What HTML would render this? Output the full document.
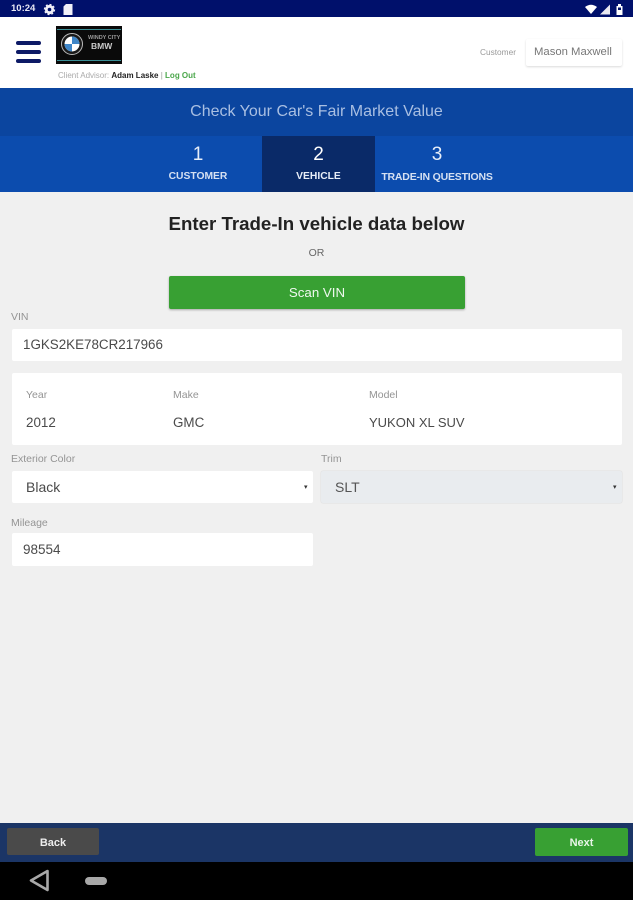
<!DOCTYPE html>
<html><head><meta charset="utf-8">
<style>
*{box-sizing:border-box}
html,body{margin:0;padding:0}
body{width:633px;height:900px;position:relative;overflow:hidden;background:#f0f0f0;font-family:"Liberation Sans",sans-serif;color:#444}
#w{position:absolute;left:0;top:0;width:633px;height:900px;filter:blur(.35px)}
.a{position:absolute}
.t{position:absolute;white-space:nowrap;line-height:1}
.box{position:absolute;background:#fff;border-radius:2px}
.lab{position:absolute;white-space:nowrap;line-height:1;font-size:10.500px;color:#949494}
.val{position:absolute;white-space:nowrap;line-height:1;font-size:13.400px;color:#4a4a4a}
</style></head><body><div id="w">
<div class="a" style="left:0;top:0;width:633px;height:17px;background:#00106b"></div>
<div class="t" style="left:11px;top:4px;font-size:9.500px;font-weight:bold;color:#e8e8f4">10:24</div>
<svg class="a" style="left:0;top:0" width="633" height="17">
<circle cx="49.500" cy="9.500" r="3.200" fill="none" stroke="#f0f0f8" stroke-width="2.800"/>
<circle cx="49.500" cy="9.500" r="5" fill="none" stroke="#f0f0f8" stroke-width="1.300" stroke-dasharray="2 1.900"/>
<path d="M63.500 6.500L66 4h6.500v11h-9z" fill="#f0f0f8"/>
<path d="M585 7q6-4.500 12 0l-6 7z" fill="#fff"/>
<path d="M600 14.500l10-10v10z" fill="#e8e8f0"/>
<path d="M616.500 6h1.500v-2h3v2h1.500v9h-6z" fill="#fff"/>
<rect x="618" y="7.500" width="3" height="2.500" fill="#00106b"/>
</svg>
<div class="a" style="left:0;top:17px;width:633px;height:71px;background:#fff"></div>
<div class="a" style="left:16px;top:41px;width:25px;height:3.500px;background:#0d1a66;border-radius:2px"></div>
<div class="a" style="left:16px;top:50px;width:25px;height:3.500px;background:#0d1a66;border-radius:2px"></div>
<div class="a" style="left:16px;top:59px;width:25px;height:3.500px;background:#0d1a66;border-radius:2px"></div>
<div class="a" style="left:56px;top:26px;width:66px;height:38px;background:#0a0a0a"></div>
<div class="a" style="left:57px;top:29px;width:64px;height:1px;background:#3b8f96"></div>
<div class="a" style="left:57px;top:60px;width:64px;height:1px;background:#3b8f96"></div>
<svg class="a" style="left:61px;top:33px" width="22" height="22">
<circle cx="11" cy="11" r="10.500" fill="#1a1a1a" stroke="#bbb" stroke-width="1"/>
<circle cx="11" cy="11" r="7.500" fill="#fff"/>
<path d="M11 11V3.500a7.500 7.500 0 0 1 7.500 7.500zM11 11v7.500a7.500 7.500 0 0 1-7.500-7.500z" fill="#3f86c8"/>
</svg>
<div class="t" style="left:88px;top:35.500px;font-size:5.500px;font-weight:bold;color:#999">WINDY CITY</div>
<div class="t" style="left:91px;top:42px;font-size:8.500px;font-weight:bold;color:#ccc">BMW</div>
<div class="t" style="left:58px;top:72px;font-size:8px;color:#aaa">Client Advisor: <span style="color:#222;font-weight:bold">Adam Laske</span> <span style="color:#999">|</span> <span style="color:#4aa64a;font-weight:bold">Log Out</span></div>
<div class="t" style="left:480px;top:48px;font-size:8.300px;color:#999">Customer</div>
<div class="a" style="left:526px;top:39px;width:96px;height:27px;background:#fff;border-radius:2px;box-shadow:0 1px 2px rgba(0,0,0,.15)"></div>
<div class="t" style="left:534px;top:46.500px;font-size:11.300px;color:#777">Mason Maxwell</div>
<div class="a" style="left:0;top:88px;width:633px;height:48px;background:#0b459f"></div>
<div class="t" style="left:0;width:633px;text-align:center;top:104px;font-size:16px;color:#a9bfe2">Check Your Car's Fair Market Value</div>
<div class="a" style="left:0;top:136px;width:633px;height:56px;background:#0c4cae"></div>
<div class="a" style="left:262px;top:136px;width:113px;height:56px;background:#0a2a68"></div>
<div class="t" style="left:141px;width:114px;text-align:center;top:145px;font-size:19px;color:#e8eef8">1</div>
<div class="t" style="left:262px;width:113px;text-align:center;top:145px;font-size:19px;color:#fff">2</div>
<div class="t" style="left:380px;width:114px;text-align:center;top:145px;font-size:19px;color:#e8eef8">3</div>
<div class="t" style="left:141px;width:114px;text-align:center;top:171.500px;font-size:10.300px;font-weight:bold;color:#d5e0f2">CUSTOMER</div>
<div class="t" style="left:262px;width:113px;text-align:center;top:171.500px;font-size:10.300px;font-weight:bold;color:#e8eef8">VEHICLE</div>
<div class="t" style="left:380px;width:114px;text-align:center;top:171.500px;font-size:10.500px;font-weight:bold;letter-spacing:-.2px;color:#d5e0f2">TRADE-IN QUESTIONS</div>
<div class="t" style="left:0;width:633px;text-align:center;top:215px;font-size:18.700px;font-weight:bold;color:#222">Enter Trade-In vehicle data below</div>
<div class="t" style="left:0;width:633px;text-align:center;top:248px;font-size:10.500px;color:#666">OR</div>
<div class="a" style="left:169px;top:276px;width:296px;height:33px;background:#38a033;border-radius:2px;box-shadow:0 1px 2px rgba(0,0,0,.3)"></div>
<div class="t" style="left:169px;width:296px;text-align:center;top:285.500px;font-size:13.300px;color:#eef8ee">Scan VIN</div>
<div class="lab" style="left:11px;top:312px">VIN</div>
<div class="box" style="left:12px;top:329px;width:610px;height:32px"></div>
<div class="val" style="left:23px;top:338px">1GKS2KE78CR217966</div>
<div class="box" style="left:12px;top:373px;width:610px;height:72px"></div>
<div class="lab" style="left:26px;top:390px">Year</div>
<div class="lab" style="left:173px;top:390px">Make</div>
<div class="lab" style="left:369px;top:390px">Model</div>
<div class="val" style="left:26px;top:416px">2012</div>
<div class="val" style="left:173px;top:416px">GMC</div>
<div class="val" style="left:369px;top:416px;font-size:13px">YUKON XL SUV</div>
<div class="lab" style="left:11px;top:454px">Exterior Color</div>
<div class="lab" style="left:321px;top:454px">Trim</div>
<div class="box" style="left:12px;top:471px;width:301px;height:32px"></div>
<div class="val" style="left:26px;top:480px;font-size:14px">Black</div>
<div class="t" style="left:304px;top:484px;font-size:7px;color:#333">▾</div>
<div class="box" style="left:321px;top:471px;width:301px;height:32px;background:#e9ecef;box-shadow:0 0 1px rgba(0,0,0,.2)"></div>
<div class="val" style="left:335px;top:480px;color:#555;font-size:14px">SLT</div>
<div class="t" style="left:613px;top:484px;font-size:7px;color:#333">▾</div>
<div class="lab" style="left:11px;top:518px">Mileage</div>
<div class="box" style="left:12px;top:533px;width:301px;height:33px"></div>
<div class="val" style="left:23px;top:543px;font-size:13.500px">98554</div>
<div class="a" style="left:0;top:823px;width:633px;height:39px;background:#1b3566"></div>
<div class="a" style="left:7px;top:828px;width:92px;height:27px;background:#4a4a4a;border-radius:2px"></div>
<div class="t" style="left:7px;width:92px;text-align:center;top:837.500px;font-size:11px;font-weight:bold;color:#eee">Back</div>
<div class="a" style="left:535px;top:828px;width:93px;height:28px;background:#38a033;border-radius:2px"></div>
<div class="t" style="left:535px;width:93px;text-align:center;top:837.500px;font-size:11px;font-weight:bold;color:#e8f6e8">Next</div>
<div class="a" style="left:0;top:862px;width:633px;height:38px;background:#000"></div>
<svg class="a" style="left:0;top:862px" width="633" height="38">
<path d="M47.500 9L31 18.500 47.500 28z" fill="none" stroke="#a8a8a8" stroke-width="2.600" stroke-linejoin="round"/>
<rect x="85" y="15" width="22" height="8" rx="4" fill="#a8a8a8"/>
</svg>
</div></body></html>
